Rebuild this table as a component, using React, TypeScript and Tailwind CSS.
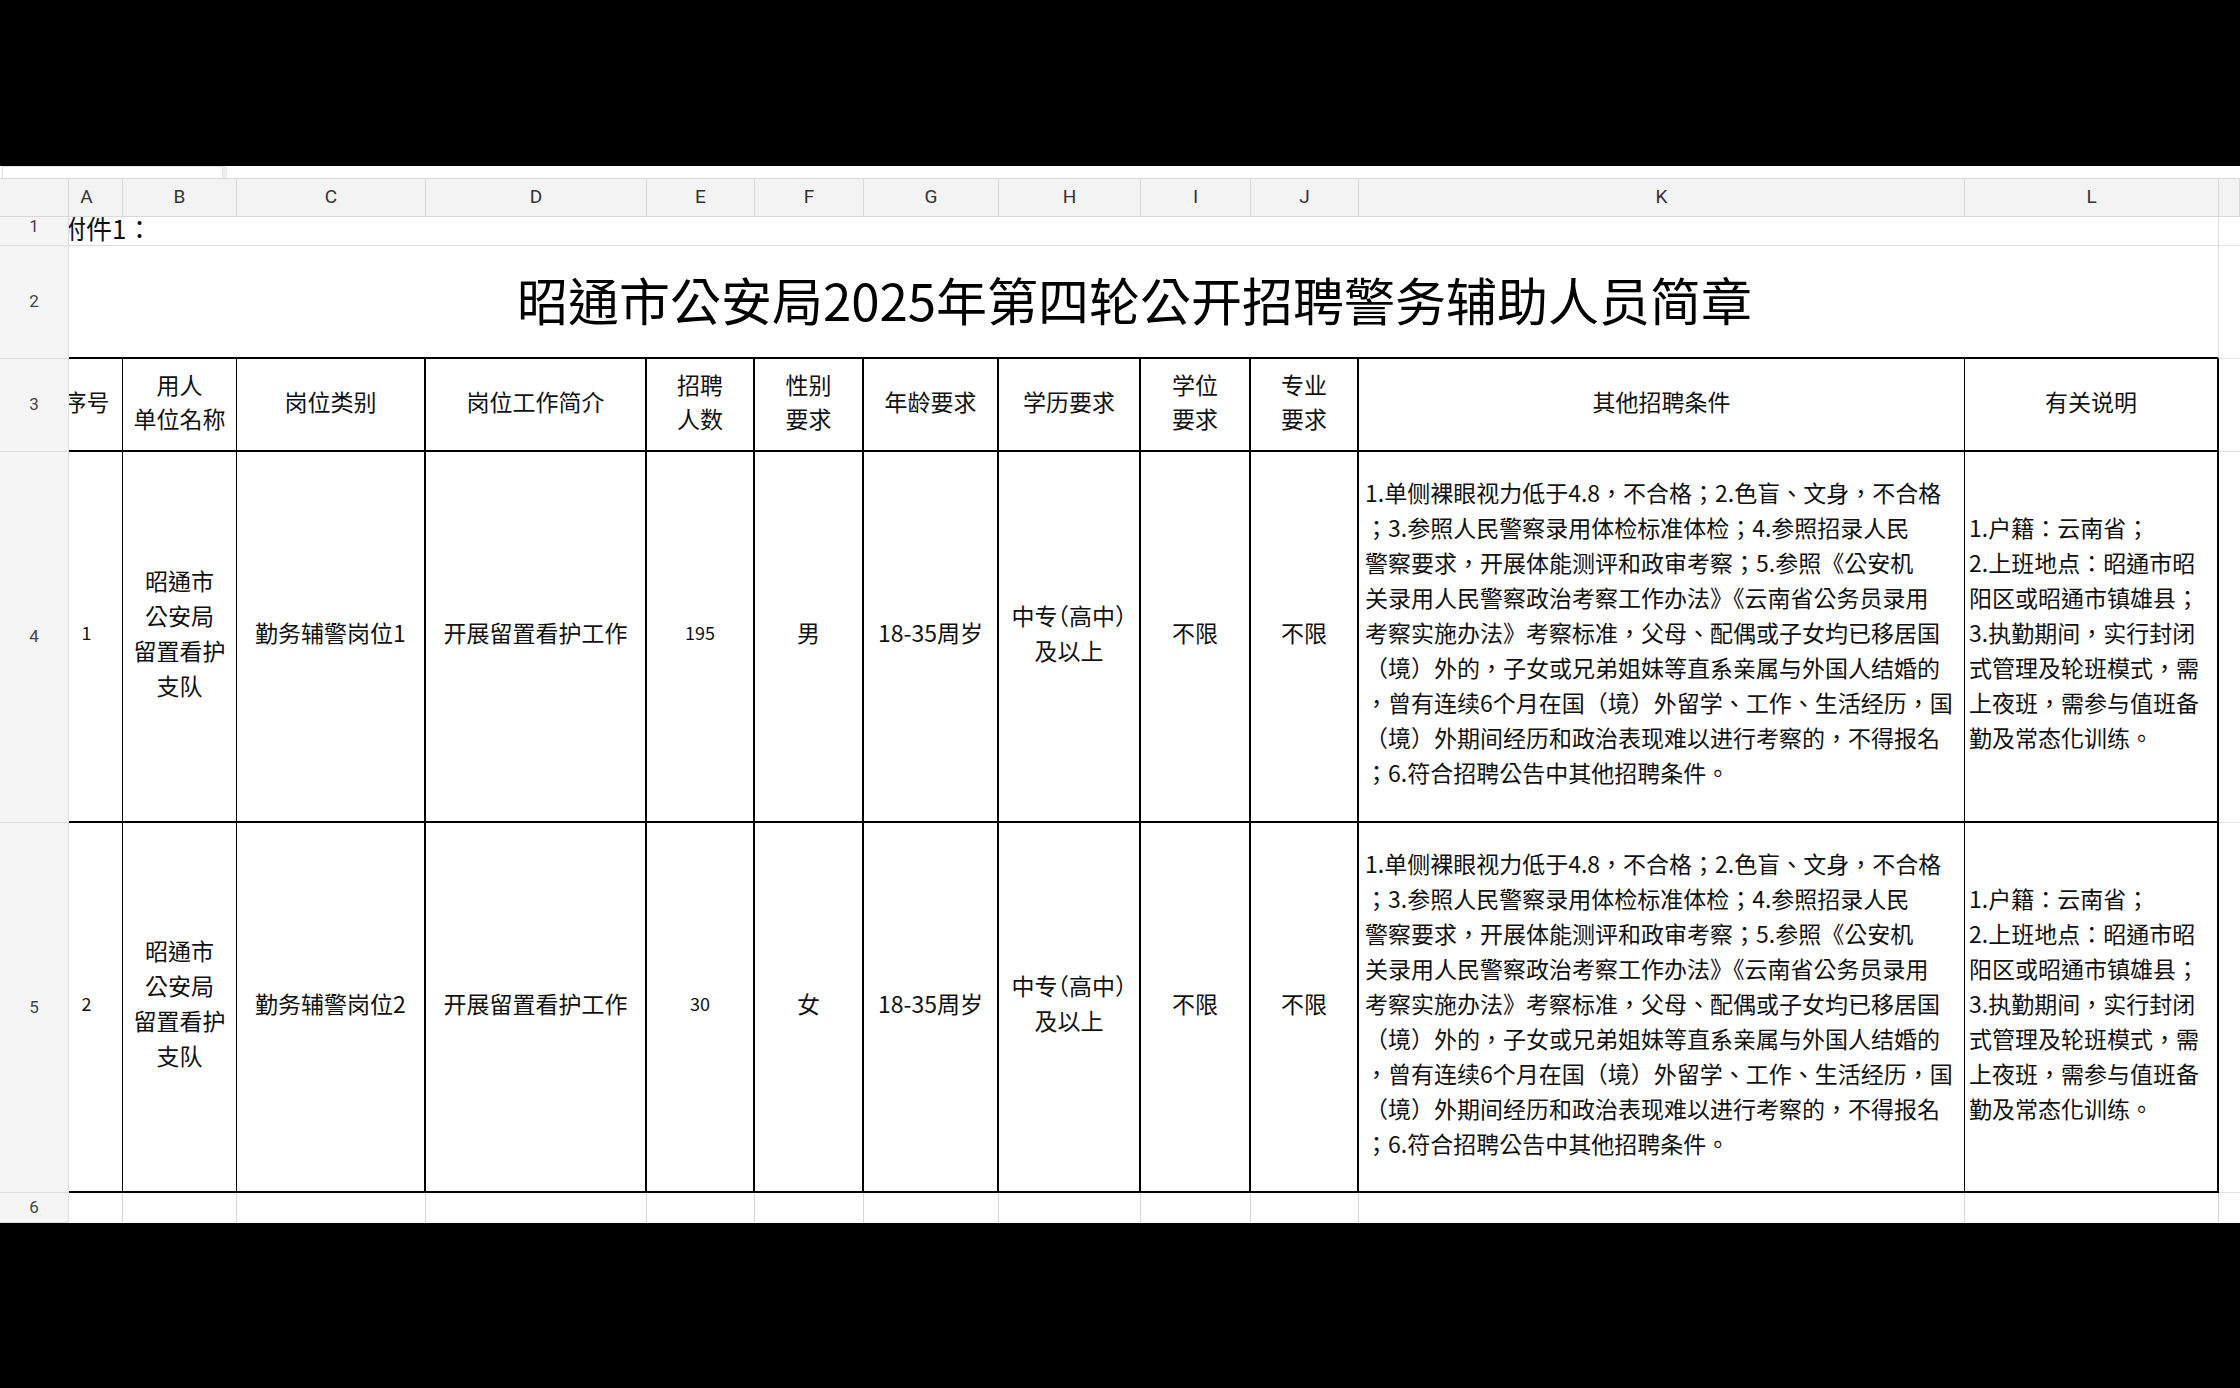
import React from 'react';

const colLetters = ['A', 'B', 'C', 'D', 'E', 'F', 'G', 'H', 'I', 'J', 'K', 'L'];

// right-hand border of each table column A..L (thin ones are 1px in the sheet)
const tableBorders = [
  'border-r',
  'border-r',
  'border-r-2',
  'border-r-2',
  'border-r-2',
  'border-r-2',
  'border-r-2',
  'border-r-2',
  'border-r-2',
  'border-r-2',
  'border-r',
  'border-r-2',
];

const headers: string[][] = [
  ['序号'],
  ['用人', '单位名称'],
  ['岗位类别'],
  ['岗位工作简介'],
  ['招聘', '人数'],
  ['性别', '要求'],
  ['年龄要求'],
  ['学历要求'],
  ['学位', '要求'],
  ['专业', '要求'],
  ['其他招聘条件'],
  ['有关说明'],
];

const otherReq = [
  '1.单侧裸眼视力低于4.8，不合格；2.色盲、文身，不合格',
  '；3.参照人民警察录用体检标准体检；4.参照招录人民',
  '警察要求，开展体能测评和政审考察；5.参照《公安机',
  '关录用人民警察政治考察工作办法》《云南省公务员录用',
  '考察实施办法》考察标准，父母、配偶或子女均已移居国',
  '（境）外的，子女或兄弟姐妹等直系亲属与外国人结婚的',
  '，曾有连续6个月在国（境）外留学、工作、生活经历，国',
  '（境）外期间经历和政治表现难以进行考察的，不得报名',
  '；6.符合招聘公告中其他招聘条件。',
];

const notes = [
  '1.户籍：云南省；',
  '2.上班地点：昭通市昭',
  '阳区或昭通市镇雄县；',
  '3.执勤期间，实行封闭',
  '式管理及轮班模式，需',
  '上夜班，需参与值班备',
  '勤及常态化训练。',
];

const rows = [
  { no: '1', post: '勤务辅警岗位1', count: '195', sex: '男' },
  { no: '2', post: '勤务辅警岗位2', count: '30', sex: '女' },
];

const colHead =
  "bg-[#f3f3f3] border-t border-r border-b border-[#d8d8d8] flex items-center justify-center text-[19px] text-[#333] font-['Roboto',sans-serif]";
const rowHead =
  "bg-[#f5f5f5] border-r border-b border-[#dedede] flex items-center justify-center text-[17px] text-[#444] font-['Roboto',sans-serif]";
// table body cell, text sits a little above the middle like in the sheet
const cell = 'border-b-2 border-black flex items-center justify-center pb-[8px]';

function Lines({ lines, className = '' }: { lines: string[]; className?: string }) {
  return (
    <div className={`flex flex-col items-center ${className}`}>
      {lines.map((l, i) => (
        <span key={i}>{l}</span>
      ))}
    </div>
  );
}

export default function App() {
  return (
    <div className="w-[2240px] h-[1388px] bg-black flex flex-col overflow-hidden font-['Noto_Sans_CJK_TC','Noto_Sans_CJK_SC',sans-serif] text-[#111]">
      <div className="h-[166px] shrink-0" />

      {/* name box strip */}
      <div className="h-[12px] shrink-0 bg-white flex">
        <div className="w-[221px] ml-[2px] border border-b-0 border-[#e2e2e2]" />
        <div className="w-[4px] bg-[#eeeeee]" />
      </div>

      <div className="grid grid-cols-[69px_54px_114px_189px_221px_108px_109px_135px_142px_110px_108px_606px_254px_21px] grid-rows-[39px_29px_113px_93px_371px_370px_30px] bg-white shrink-0">
        {/* column letters */}
        <div className={colHead} />
        {colLetters.map((c, i) => (
          <div key={c} className={`${colHead} ${i === 0 ? 'pr-[18px]' : ''}`}>
            {c}
          </div>
        ))}
        <div className={colHead} />

        {/* row 1 - sheet is scrolled a little, so the note is cut at the left */}
        <div className={`${rowHead} pb-[8px]`}>1</div>
        <div className="col-span-12 border-r border-b border-[#dcdcdc] overflow-hidden flex items-end pb-[4px]">
          <span className="-ml-[9px] text-[26px] leading-none whitespace-nowrap shrink-0">附件1：</span>
        </div>
        <div className="border-b border-[#e2e2e2]" />

        {/* row 2 */}
        <div className={rowHead}>2</div>
        <div className="col-span-12 border-r border-r-[#dcdcdc] border-b-2 border-b-black flex items-center justify-center pr-[18px] pb-[4px]">
          <span className="text-[51px] leading-none whitespace-nowrap text-black">
            昭通市公安局2025年第四轮公开招聘警务辅助人员简章
          </span>
        </div>
        <div className="border-b border-[#e2e2e2]" />

        {/* row 3 headers */}
        <div className={rowHead}>3</div>
        {headers.map((h, i) => (
          <div
            key={i}
            className={`${tableBorders[i]} ${cell} overflow-hidden whitespace-nowrap text-[23px] leading-[34px] ${i === 0 ? 'pr-[18px]' : ''}`}
          >
            <Lines lines={h} />
          </div>
        ))}
        <div className="border-b border-[#e2e2e2]" />

        {/* rows 4, 5 */}
        {rows.map((r, ri) => (
          <React.Fragment key={r.no}>
            <div className={rowHead}>{ri + 4}</div>
            <div className={`border-r ${cell} pr-[18px] text-[18px]`}>{r.no}</div>
            <div className={`border-r ${cell} text-[23px] leading-[35px] whitespace-nowrap`}>
              <Lines lines={['昭通市', '公安局', '留置看护', '支队']} />
            </div>
            <div className={`border-r-2 ${cell} text-[23px] whitespace-nowrap`}>{r.post}</div>
            <div className={`border-r-2 ${cell} text-[23px] whitespace-nowrap`}>开展留置看护工作</div>
            <div className={`border-r-2 ${cell} text-[18px]`}>{r.count}</div>
            <div className={`border-r-2 ${cell} text-[23px]`}>{r.sex}</div>
            <div className={`border-r-2 ${cell} text-[23px] whitespace-nowrap`}>18-35周岁</div>
            <div className={`border-r-2 ${cell} text-[23px] leading-[35px] whitespace-nowrap [font-feature-settings:'halt']`}>
              <Lines lines={['中专（高中）', '及以上']} />
            </div>
            <div className={`border-r-2 ${cell} text-[23px]`}>不限</div>
            <div className={`border-r-2 ${cell} text-[23px]`}>不限</div>
            <div className="border-r border-b-2 border-black flex flex-col justify-center pl-[6px] pb-[8px] text-[23px] leading-[35px] whitespace-nowrap overflow-hidden">
              {otherReq.map((l, i) => (
                <span key={i}>{l}</span>
              ))}
            </div>
            <div className="border-r-2 border-b-2 border-black flex flex-col justify-center pl-[4px] pb-[8px] text-[23px] leading-[35px] whitespace-nowrap overflow-hidden">
              {notes.map((l, i) => (
                <span key={i}>{l}</span>
              ))}
            </div>
            <div className="border-b border-[#e2e2e2]" />
          </React.Fragment>
        ))}

        {/* row 6 */}
        <div className={rowHead}>6</div>
        {colLetters.map((c) => (
          <div key={c} className="border-r border-[#d6d6d6]" />
        ))}
        <div />
      </div>

      <div className="flex-1 bg-black" />
    </div>
  );
}
